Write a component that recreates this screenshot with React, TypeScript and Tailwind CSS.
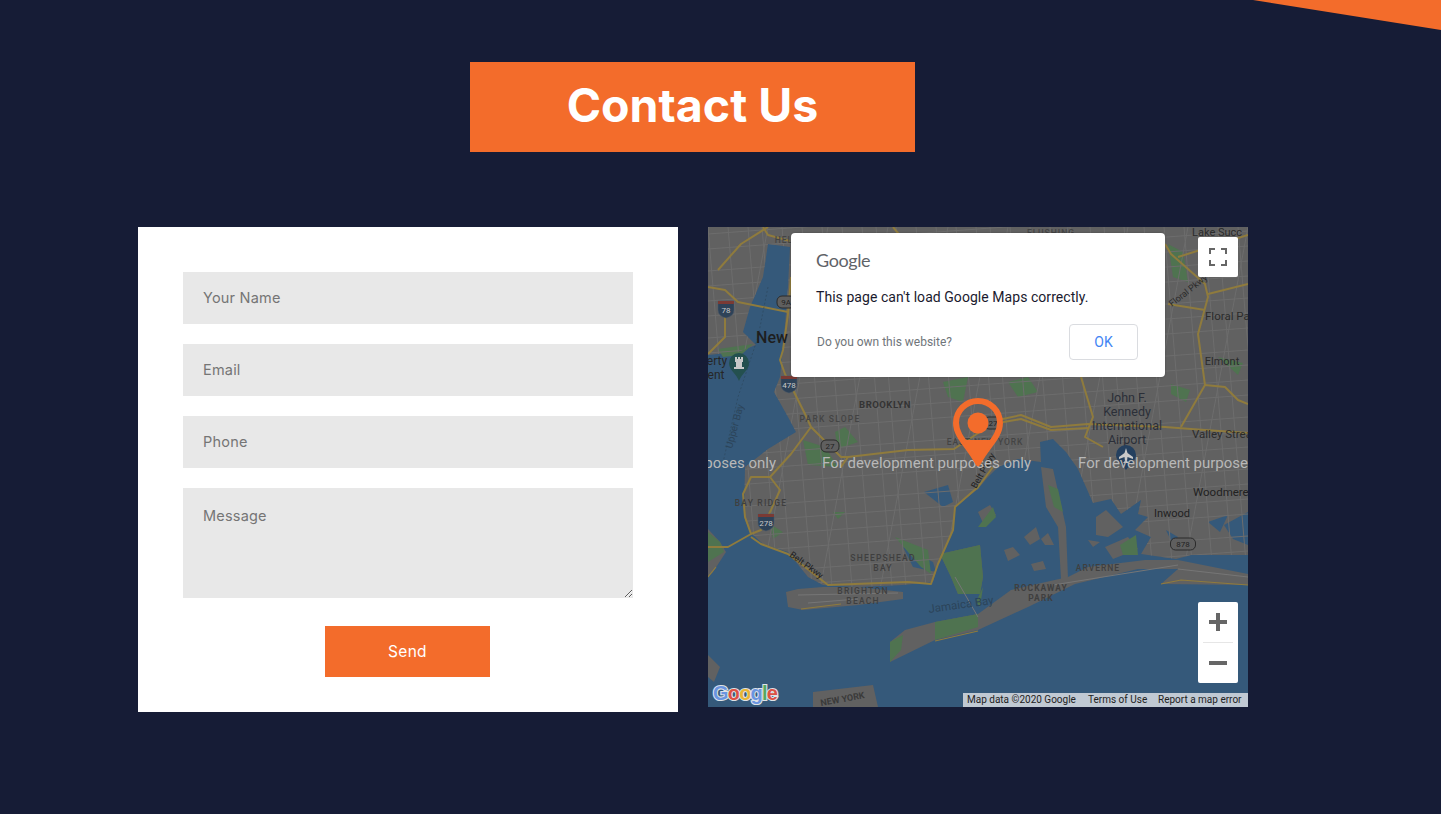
import React from "react";

const poppins = { fontFamily: "Inter, 'Noto Sans', sans-serif" };

const LAND =
  "M0 0 L540 0 L540 328 L483 328 L468 332 L433 327 L443 310 L427 303 L440 290 L430 287 L433 273 L413 287 L403 272 L385 276 L370 242 L358 225 L345 212 L332 215 L333 235 L310 232 L290 240 L280 250 L270 262 L247 280 L245 303 L230 337 L225 355 L195 358 L150 360 L115 358 L100 350 L80 325 L55 317 L42 305 L36 290 L37 240 L60 222 L88 205 L80 190 L66 165 L72 150 L76 110 L80 60 L82 20 L60 17 L55 50 L42 80 L35 105 L48 118 L30 125 L0 128 Z";
const EXTRA = [
  // coney island
  "M78 365 L90 362 L115 360 L150 360 L195 365 L195 372 L150 378 L95 383 L80 380 Z",
  // rockaway peninsula
  "M182 435 L182 415 L197 403 L227 395 L270 387 L303 363 L360 350 L380 340 L437 333 L470 333 L540 347 L540 358 L453 357 L470 342 L430 342 L367 357 L320 380 L270 403 L227 413 Z",
  // staten island
  "M0 302 L12 315 L18 325 L5 345 L0 350 Z",
  // floyd bennett
  "M232 327 L272 318 L275 350 L272 367 L250 367 L243 350 Z",
  // cross bay and bay islands
  "M333 240 L345 242 L358 300 L360 352 L353 352 L350 300 L338 280 Z",
  "M296 323 L305 320 L312 328 L300 334 Z",
  "M323 337 L335 334 L338 342 L326 344 Z",
  "M316 310 L328 300 L332 312 L322 318 Z",
  "M333 312 L340 306 L346 318 L337 318 Z",
  "M270 285 L282 278 L288 288 L275 296 Z",
  "M388 290 L398 283 L415 300 L400 310 L388 308 Z",
  "M380 313 L392 315 L385 320 Z",
  "M397 320 L420 310 L430 322 L405 332 Z",
  // bottom edge
  "M105 465 L165 458 L170 480 L105 480 Z",
  "M0 428 L12 440 L6 455 L0 450 Z",
];
const PARKS = [
  "M10 122 L45 117 L33 128 L15 130 Z",
  "M127 205 L137 200 L150 215 L130 222 Z",
  "M95 213 L117 220 L130 240 L100 238 Z",
  "M62 297 L75 305 L65 312 Z",
  "M125 285 L137 285 L130 292 Z",
  "M187 310 L220 323 L223 347 L213 340 Z",
  "M232 327 L272 318 L275 350 L272 367 L250 367 L243 350 Z",
  "M182 435 L182 415 L195 408 L193 423 Z",
  "M227 395 L270 387 L270 400 L227 413 Z",
  "M463 157 L482 163 L478 175 L463 167 Z",
  "M460 17 L475 25 L480 55 L465 50 Z",
  "M268 375 L275 360 L272 380 Z",
  "M412 318 L428 308 L430 328 L415 328 Z",
  "M270 300 L285 280 L288 290 L278 300 Z",
  "M340 258 L350 262 L355 285 L346 280 Z",
  "M300 155 L320 150 L330 165 L310 170 Z",
  "M510 130 L535 136 L530 148 Z",
  "M235 155 L260 150 L255 175 L240 170 Z",
  "M0 305 L12 315 L16 325 L0 335 Z",
];
const WATER_POCKETS = [
  "M216 265 L235 280 L245 275 L240 258 Z",
  "M195 320 L225 335 L228 345 L205 340 Z",
  "M516 298 L540 285 L540 318 L525 312 Z",
  "M500 295 L520 288 L512 305 Z",
  "M458 303 L470 310 L465 318 Z",
];

const HIGHWAYS = [
  "M0 60 L17 63 L30 75 L80 85",
  "M10 43 L33 17 L60 0",
  "M17 80 L17 110 L0 127",
  "M83 50 L80 87 L75 123 L72 133 L77 147 L97 187 L103 200 L133 230 L140 230 L200 223 L246 222 L290 193 L313 188 L343 200 L380 197 L457 200 L483 202 L540 206",
  "M290 196 L313 192 L343 203 L380 201",
  "M373 150 L385 190 L377 210 L395 220",
  "M473 200 L497 158 L517 160 L530 173 L540 177",
  "M497 158 L490 107 L500 70 L497 57 L463 27 L457 17",
  "M500 67 L540 57",
  "M460 77 L497 83",
  "M470 30 L540 8",
  "M0 320 L20 320 L43 307 L37 290 L35 267 L43 250 L62 250 L72 263 L63 283 L53 303 L43 307",
  "M43 310 L53 317 L80 327 L97 340 L120 358 L200 355 L223 357 L230 337 L245 303 L247 280 L270 260 L285 240",
  "M103 200 L83 227 L62 250",
  "M55 0 L60 8 L82 14",
  "M140 230 L133 240",
  "M185 0 L200 18",
];
const SANDS = ["M453 357 L473 353 L540 358", "M93 382 L133 377", "M270 404 L227 414", "M0 350 L8 340"];

// street grid, clipped to the land shapes
const STREETS = [
  ...Array.from({ length: 34 }, (_, i) => {
    const x = -60 + i * 19 + ((i * 7) % 6);
    return `M${x} 0 L${x + 40} 480`;
  }),
  ...Array.from({ length: 30 }, (_, i) => {
    const y = -30 + i * 17 + ((i * 5) % 7);
    return `M0 ${y} L540 ${y - 40}`;
  }),
  ...Array.from({ length: 10 }, (_, i) => `M${i * 60} 0 L${i * 60 - 90} 480`),
];

const labels: [string, number, number, number, number, string, number?][] = [
  // text, x, y, size, weight, colour, tracking
  ["BROOKLYN", 177, 181, 9.5, 700, "#343434", 0.5],
  ["PARK SLOPE", 122, 195, 8.5, 500, "#444", 1.2],
  ["EAST NEW YORK", 277, 218, 8.5, 500, "#444", 0.9],
  ["FLUSHING", 343, 9, 8.5, 500, "#444", 1],
  ["HEL", 76, 16, 8.5, 500, "#444", 1],
  ["BAY RIDGE", 53, 279, 8.5, 500, "#3f3f3f", 1.2],
  ["SHEEPSHEAD", 175, 334, 8.5, 500, "#3f3f3f", 1.2],
  ["BAY", 175, 344, 8.5, 500, "#3f3f3f", 1.2],
  ["BRIGHTON", 155, 367, 8.5, 500, "#3f3f3f", 1.2],
  ["BEACH", 155, 377, 8.5, 500, "#3f3f3f", 1.2],
  ["ARVERNE", 390, 344, 8.5, 500, "#3f3f3f", 1],
  ["ROCKAWAY", 333, 364, 8.5, 700, "#3f3f3f", 1],
  ["PARK", 333, 374, 8.5, 700, "#3f3f3f", 1],
  ["New", 64, 116, 16, 500, "#1e1e1e"],
  ["John F.", 419, 175, 12.5, 400, "#2b2f38"],
  ["Kennedy", 419, 189, 12.5, 400, "#2b2f38"],
  ["International", 419, 203, 12.5, 400, "#2b2f38"],
  ["Airport", 419, 217, 12.5, 400, "#2b2f38"],
  ["Elmont", 514, 138, 11, 400, "#2b2b2b"],
  ["Inwood", 464, 290, 11, 400, "#222"],
  ["erty", 9, 138, 12, 400, "#262626"],
  ["ent", 8, 152, 12, 400, "#262626"],
];

const Shield = ({ x, y, t }: { x: number; y: number; t: string }) => (
  <g>
    <path d={`M${x - 8} ${y - 7} h16 v9 q0 6 -8 8 q-8 -2 -8 -8 Z`} fill="#2d4258" stroke="#4a5968" strokeWidth="0.5" />
    <rect x={x - 8} y={y - 7} width="16" height="3" fill="#7a3a34" />
    <text x={x} y={y + 5} textAnchor="middle" fontSize="8" fill="#c9c9c9">
      {t}
    </text>
  </g>
);

const Route = ({ x, y, t }: { x: number; y: number; t: string }) => (
  <g>
    <rect x={x - t.length * 3.5 - 2} y={y - 6} width={t.length * 7 + 4} height="12" rx="5" fill="#5f5f5f" stroke="#2b2b2b" />
    <text x={x} y={y + 3} textAnchor="middle" fontSize="8" fill="#222">
      {t}
    </text>
  </g>
);

const DEV_NOTICE = "For development purposes only";

const MapPicture = () => (
  <svg viewBox="0 0 540 480" className="block h-full w-full" fontFamily="Roboto, sans-serif">
    <defs>
      <clipPath id="landclip">
        <path d={LAND} />
      </clipPath>
    </defs>
    <rect width="540" height="480" fill="#35597a" />
    <path d={LAND} fill="#616161" />
    {EXTRA.map((d) => (
      <path key={d} d={d} fill="#616161" />
    ))}
    {WATER_POCKETS.map((d) => (
      <path key={d} d={d} fill="#35597a" />
    ))}
    {PARKS.map((d) => (
      <path key={d} d={d} fill="#4f7350" />
    ))}
    <g clipPath="url(#landclip)" stroke="#6d6d6d" strokeWidth="1" fill="none">
      {STREETS.map((d) => (
        <path key={d} d={d} />
      ))}
    </g>
    <path d="M90 368 L190 366 M100 376 L150 372 M345 358 L470 338 M470 342 L540 350 M247 350 L270 390" fill="none" stroke="#767676" />
    <g fill="none" stroke="#8f7b3d" strokeWidth="2" strokeLinejoin="round">
      {HIGHWAYS.map((d) => (
        <path key={d} d={d} />
      ))}
    </g>
    <g fill="none" stroke="#8f7b3d" strokeWidth="1.2">
      {SANDS.map((d) => (
        <path key={d} d={d} />
      ))}
    </g>
    <path d="M60 60 L50 110 L30 170 L14 240" fill="none" stroke="#2c4459" strokeWidth="0.6" strokeDasharray="2 2" />

    {labels.map(([t, x, y, size, weight, fill, ls]) => (
      <text key={t + x} x={x} y={y} fontSize={size} fontWeight={weight} fill={fill} letterSpacing={ls} textAnchor="middle">
        {t}
      </text>
    ))}
    <text x="497" y="93" fontSize="11.5" fill="#2b2b2b">Floral Park</text>
    <text x="484" y="9" fontSize="11" fill="#2b2b2b">Lake Succ</text>
    <text x="484" y="211" fontSize="11.5" fill="#2b2b2b">Valley Stream</text>
    <text x="485" y="269" fontSize="11.5" fill="#222">Woodmere</text>
    <text x="221" y="386" fontSize="11.5" fill="#2c4459" transform="rotate(-8 221 386)">Jamaica Bay</text>
    <text x="24" y="222" fontSize="10" fill="#2c4459" transform="rotate(-75 24 222)">Upper Bay</text>
    <text x="81" y="329" fontSize="9" fill="#1f1f1f" transform="rotate(36 81 329)">Belt Pkwy</text>
    <text x="268" y="262" fontSize="9" fill="#1f1f1f" transform="rotate(-60 268 262)">Belt Pkwy</text>
    <text x="464" y="80" fontSize="9" fill="#2b2b2b" transform="rotate(-38 464 80)">Floral Pkwy</text>
    <g transform="rotate(-10 135 475)" fontSize="9" fontWeight="700" fill="#3a3a3a" textAnchor="middle">
      <text x="135" y="475">NEW YORK</text>
    </g>

    <Shield x={18} y={81} t="78" />
    <Shield x={81} y={156} t="478" />
    <Shield x={58} y={294} t="278" />
    <Route x={78} y={75} t="9A" />
    <Route x={122} y={219} t="27" />
    <Route x={285} y={196} t="27" />
    <Route x={475} y={317} t="878" />

    <path d="M31 126 a10 10 0 0 1 10 10 c0 7 -7 10 -10 18 c-3 -8 -10 -11 -10 -18 a10 10 0 0 1 10 -10 Z" fill="#24504f" />
    <path d="M27 130 h2 v2 h1 v-2 h2 v2 h1 v-2 h2 v5 h-1 v5 h2 v2 h-10 v-2 h2 v-5 h-1 Z" fill="#c9c9c9" />
    <path d="M418 218 a10 10 0 0 1 10 10 c0 6 -6 9 -10 15 c-4 -6 -10 -9 -10 -15 a10 10 0 0 1 10 -10 Z" fill="#24405f" />
    <path d="M418 221 L419.5 226 L425 230 V232 L419.5 230 L419 234 L421 236 H415 L417 234 L416.5 230 L411 232 V230 L416.5 226 Z" fill="#c9c9c9" />

    <g fontSize="15" fill="#b8b8b8">
      <text x="-141" y="241">{DEV_NOTICE}</text>
      <text x="114" y="241">{DEV_NOTICE}</text>
      <text x="370" y="241">{DEV_NOTICE}</text>
    </g>

    <text
      x="5"
      y="473"
      fontFamily="'Liberation Sans', sans-serif"
      fontWeight="700"
      fontSize="20"
      letterSpacing="-0.8"
      stroke="#dfe3e8"
      strokeWidth="2.2"
      paintOrder="stroke"
    >
      <tspan fill="#6a95e0">G</tspan>
      <tspan fill="#dd5144">o</tspan>
      <tspan fill="#e8b534">o</tspan>
      <tspan fill="#6a95e0">g</tspan>
      <tspan fill="#55a860">l</tspan>
      <tspan fill="#dd5144">e</tspan>
    </text>
  </svg>
);

const fieldClass =
  "block w-full shrink-0 bg-[#e8e8e8] px-5 text-[14.5px] tracking-[0.2px] text-[#333] outline-none placeholder:text-[#757575]";

export default function App() {
  return (
    <div className="relative min-h-[814px] overflow-hidden bg-[#161c36]" style={poppins}>
      <svg className="absolute right-0 top-0" width="188" height="30" viewBox="0 0 188 30">
        <polygon points="0,0 188,0 188,30" fill="#f36c2b" />
      </svg>

      <div className="ml-[138px] w-[1110px] pt-[62px]">
        <h1 className="ml-[332px] flex h-[90px] w-[445px] items-center justify-center bg-[#f36c2b] pb-[3px] text-[46.5px] font-bold text-white">
          Contact Us
        </h1>

        <div className="mt-[75px] flex items-start gap-[30px]">
          <form className="flex h-[485px] w-[540px] flex-col gap-5 bg-white px-[45px] pb-[35px] pt-[45px]">
            <input className={`${fieldClass} h-[52px] pb-[2px]`} placeholder="Your Name" />
            <input className={`${fieldClass} h-[52px] pb-[2px]`} placeholder="Email" />
            <input className={`${fieldClass} h-[52px] pb-[2px]`} placeholder="Phone" />
            <textarea className={`${fieldClass} h-[110px] pb-[17px] pt-[18px] leading-[20px]`} placeholder="Message" />
            <button
              type="button"
              className="ml-[142px] mt-2 h-[51px] w-[165px] shrink-0 bg-[#f36c2b] text-[15.5px] tracking-[0.3px] text-white"
            >
              Send
            </button>
          </form>

          <div className="relative h-[480px] w-[540px] overflow-hidden font-['Roboto']">
            <MapPicture />

            {/* marker */}
            <svg className="absolute left-[245px] top-[171px]" width="50" height="71" viewBox="0 0 50 71">
              <path
                d="M25 3 a22 22 0 0 1 22 22 c0 14 -14 24 -22 40 c-8 -16 -22 -26 -22 -40 a22 22 0 0 1 22 -22 Z"
                fill="none"
                stroke="#f36c2b"
                strokeWidth="6"
                strokeLinejoin="round"
              />
              <path d="M9 42 L25 69 L41 42 Z" fill="#f36c2b" />
              <circle cx="25" cy="25" r="10.5" fill="#f36c2b" />
            </svg>

            {/* error dialog */}
            <div className="absolute left-[83px] top-[6px] h-[144px] w-[374px] rounded-[4px] bg-white px-[25px] pt-[15px] shadow-[0_0_2px_rgba(0,0,0,0.3)]">
              <div className="font-['Lato'] text-[18px] leading-[24px] tracking-[-0.4px] text-[#5f6368]">Google</div>
              <p className="mt-[15px] text-[14px] leading-[20px] tracking-[0.05px] text-[#1a1a2e]">
                This page can't load Google Maps correctly.
              </p>
              <div className="mt-[17px] flex items-center justify-between pr-[2px]">
                <span className="pl-px text-[12px] text-[#70757a]">Do you own this website?</span>
                <button
                  type="button"
                  className="h-9 w-[69px] rounded-[4px] border border-[#dadce0] text-[14px] text-[#4285f4]"
                >
                  OK
                </button>
              </div>
            </div>

            {/* fullscreen */}
            <button
              type="button"
              className="absolute right-[10px] top-[10px] flex h-10 w-10 items-center justify-center rounded-[2px] bg-white"
            >
              <svg width="18" height="18" viewBox="0 0 18 18" fill="none" stroke="#666" strokeWidth="2">
                <path d="M1 6 V1 H6 M12 1 H17 V6 M17 12 V17 H12 M6 17 H1 V12" />
              </svg>
            </button>

            {/* zoom */}
            <div className="absolute right-[10px] top-[375px] flex h-[81px] w-10 flex-col items-center rounded-[2px] bg-white">
              <svg className="mt-[11px]" width="18" height="18" viewBox="0 0 18 18" fill="#666">
                <path d="M7 0 h4 v7 h7 v4 h-7 v7 h-4 v-7 h-7 v-4 h7 Z" />
              </svg>
              <div className="mt-[11px] h-px w-[30px] bg-[#e6e6e6]" />
              <svg className="mt-[11px]" width="18" height="18" viewBox="0 0 18 18" fill="#666">
                <path d="M0 7 h18 v4 h-18 Z" />
              </svg>
            </div>

            {/* attribution */}
            <div className="absolute bottom-0 right-0 flex h-[14px] w-[285px] items-center whitespace-nowrap bg-[#c0c9d3] pl-1 text-[10px] leading-[14px] text-[#222]">
              <span className="w-[121px]">Map data ©2020 Google</span>
              <span className="w-[70px]">Terms of Use</span>
              <span>Report a map error</span>
            </div>
          </div>
        </div>
      </div>
    </div>
  );
}
